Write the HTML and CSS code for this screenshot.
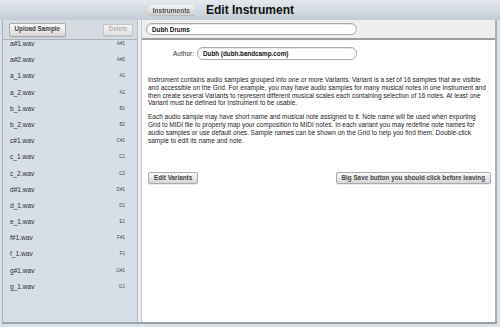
FILE: index.html
```html
<!DOCTYPE html>
<html>
<head>
<meta charset="utf-8">
<link rel="stylesheet" href="styles.css">
</head>
<body>
<div class="app">
  <header class="topbar">
    <div class="back-wrap"><a class="back">Instruments</a></div>
    <h1 class="title">Edit Instrument</h1>
    <div></div>
  </header>
  <div class="panel">
    <aside class="sidebar">
      <div class="side-tools">
        <button class="btn btn-upload">Upload Sample</button>
        <button class="btn btn-disabled">Delete</button>
      </div>
      <ul class="samples">
        <li><span class="name">a#1.wav</span><span class="note">A#1</span></li>
        <li><span class="name">a#2.wav</span><span class="note">A#2</span></li>
        <li><span class="name">a_1.wav</span><span class="note">A1</span></li>
        <li><span class="name">a_2.wav</span><span class="note">A2</span></li>
        <li><span class="name">b_1.wav</span><span class="note">B1</span></li>
        <li><span class="name">b_2.wav</span><span class="note">B2</span></li>
        <li><span class="name">c#1.wav</span><span class="note">C#1</span></li>
        <li><span class="name">c_1.wav</span><span class="note">C1</span></li>
        <li><span class="name">c_2.wav</span><span class="note">C2</span></li>
        <li><span class="name">d#1.wav</span><span class="note">D#1</span></li>
        <li><span class="name">d_1.wav</span><span class="note">D1</span></li>
        <li><span class="name">e_1.wav</span><span class="note">E1</span></li>
        <li><span class="name">f#1.wav</span><span class="note">F#1</span></li>
        <li><span class="name">f_1.wav</span><span class="note">F1</span></li>
        <li><span class="name">g#1.wav</span><span class="note">G#1</span></li>
        <li><span class="name">g_1.wav</span><span class="note">G1</span></li>
      </ul>
    </aside>
    <section class="content">
      <div class="name-bar">
        <div class="field field-name">Dubh Drums</div>
      </div>
      <div class="body">
        <div class="author-row">
          <label class="author-label">Author:</label>
          <div class="field field-author">Dubh (dubh.bandcamp.com)</div>
        </div>
        <p class="info">Instrument contains audio samples grouped into one or more Variants. Variant is a set of 16 samples that are visible<br>and accessible on the Grid. For example, you may have audio samples for many musical notes in one Instrument and<br>then create several Variants to represent different musical scales each containing selection of 16 notes. At least one<br>Variant must be defined for Instrument to be usable.</p>
        <p class="info">Each audio sample may have short name and musical note assigned to it. Note name will be used when exporting<br>Grid to MIDI file to properly map your composition to MIDI notes. In each variant you may redefine note names for<br>audio samples or use default ones. Sample names can be shown on the Grid to help you find them. Double-click<br>sample to edit its name and note.</p>
        <div class="actions">
          <button class="btn btn-action">Edit Variants</button>
          <button class="btn btn-action">Big Save button you should click before leaving</button>
        </div>
      </div>
    </section>
  </div>
</div>
</body>
</html>
```
FILE: styles.css
```css
html, body {
  margin: 0;
  padding: 0;
}
body {
  width: 500px;
  height: 327px;
  overflow: hidden;
  background: #d9e0e7;
  font-family: "Liberation Sans", Arial, sans-serif;
}
.topbar {
  height: 20px;
  display: grid;
  grid-template-columns: 1fr auto 1fr;
  align-items: center;
  column-gap: 11px;
  background: linear-gradient(#e4e9ee, #c3ccd6);
}
.back-wrap {
  display: flex;
  justify-content: flex-end;
  filter: drop-shadow(0 0 0.6px #7d848c);
}
.back {
  height: 11px;
  padding: 0 5px 0 8px;
  display: flex;
  align-items: center;
  font-size: 6.5px;
  font-weight: bold;
  color: #505050;
  background: linear-gradient(#f4f4f4, #cbcbcb);
  clip-path: polygon(0 50%, 5px 0, 100% 0, 100% 100%, 5px 100%);
}
.title {
  margin: 0;
  font-size: 12px;
  font-weight: bold;
  color: #111;
  line-height: 14px;
}
.panel {
  display: flex;
  margin-left: 2px;
  width: 495px;
  height: 302px;
  border-bottom: 2px solid #9aa3ad;
  background: #eceef0;
  gap: 3px;
}
.sidebar {
  width: 134px;
  border-left: 1px solid #a6afb9;
  border-right: 1px solid #b3bbc4;
  background: #d6dee8;
  display: flex;
  flex-direction: column;
}
.side-tools {
  height: 19px;
  border-bottom: 1px solid #a9b1ba;
  background: #d6dbe1;
  display: flex;
  align-items: center;
  justify-content: space-between;
  padding: 0 4px 0 6px;
}
.btn {
  font-family: "Liberation Sans", Arial, sans-serif;
  font-size: 6.3px;
  font-weight: bold;
  color: #454545;
  background: linear-gradient(#fbfbfb, #d6d6d6);
  border: 1px solid #ababab;
  border-radius: 2px;
  box-shadow: 0 1px 0 rgba(0, 0, 0, 0.08);
  padding: 0 4.5px;
  margin: 0;
  line-height: 1;
}
.btn-upload {
  height: 14px;
}
.btn-disabled {
  height: 12px;
  color: #b4b4b4;
  background: linear-gradient(#f3f3f3, #e2e2e2);
  border-color: #c4c4c4;
  padding: 0 4.5px;
}
.samples {
  list-style: none;
  margin: 0;
  padding: 0;
}
.samples li {
  height: 16.2px;
  display: flex;
  justify-content: space-between;
  align-items: flex-start;
  padding: 0 12px 0 7px;
  line-height: 8px;
}
.name {
  font-size: 6.6px;
  color: #2e2e2e;
}
.note {
  font-size: 4.6px;
  color: #4a4a4a;
}
.content {
  flex: 1;
  background: #fff;
  border-left: 1px solid #c6c9cc;
  border-right: 2px solid #a9b2bc;
  display: flex;
  flex-direction: column;
}
.name-bar {
  height: 18px;
  border-bottom: 2px solid #9d9d9d;
  background: #efefef;
  display: flex;
  align-items: center;
  padding-left: 4px;
}
.field {
  height: 12px;
  box-sizing: border-box;
  border: 1px solid #ababab;
  border-radius: 6px;
  background: #fff;
  font-size: 6.3px;
  font-weight: bold;
  color: #111;
  display: flex;
  align-items: center;
  padding-left: 5px;
  box-shadow: inset 0 1px 1px rgba(0, 0, 0, 0.1);
}
.field-name {
  width: 211px;
}
.field-author {
  width: 160px;
  height: 13px;
}
.body {
  padding: 7px 4px 0 6px;
}
.author-row {
  display: flex;
  align-items: center;
}
.author-label {
  width: 46px;
  text-align: right;
  margin-right: 3px;
  font-size: 6.5px;
  color: #333;
}
.info {
  margin: 16px 0 0 0;
  font-size: 6.5px;
  line-height: 7.8px;
  color: #1c1c1c;
  white-space: nowrap;
}
.info + .info {
  margin-top: 6px;
}
.actions {
  margin-top: 28px;
  display: flex;
  justify-content: space-between;
}
.btn-action {
  height: 12px;
  padding: 0 5px;
}
```
